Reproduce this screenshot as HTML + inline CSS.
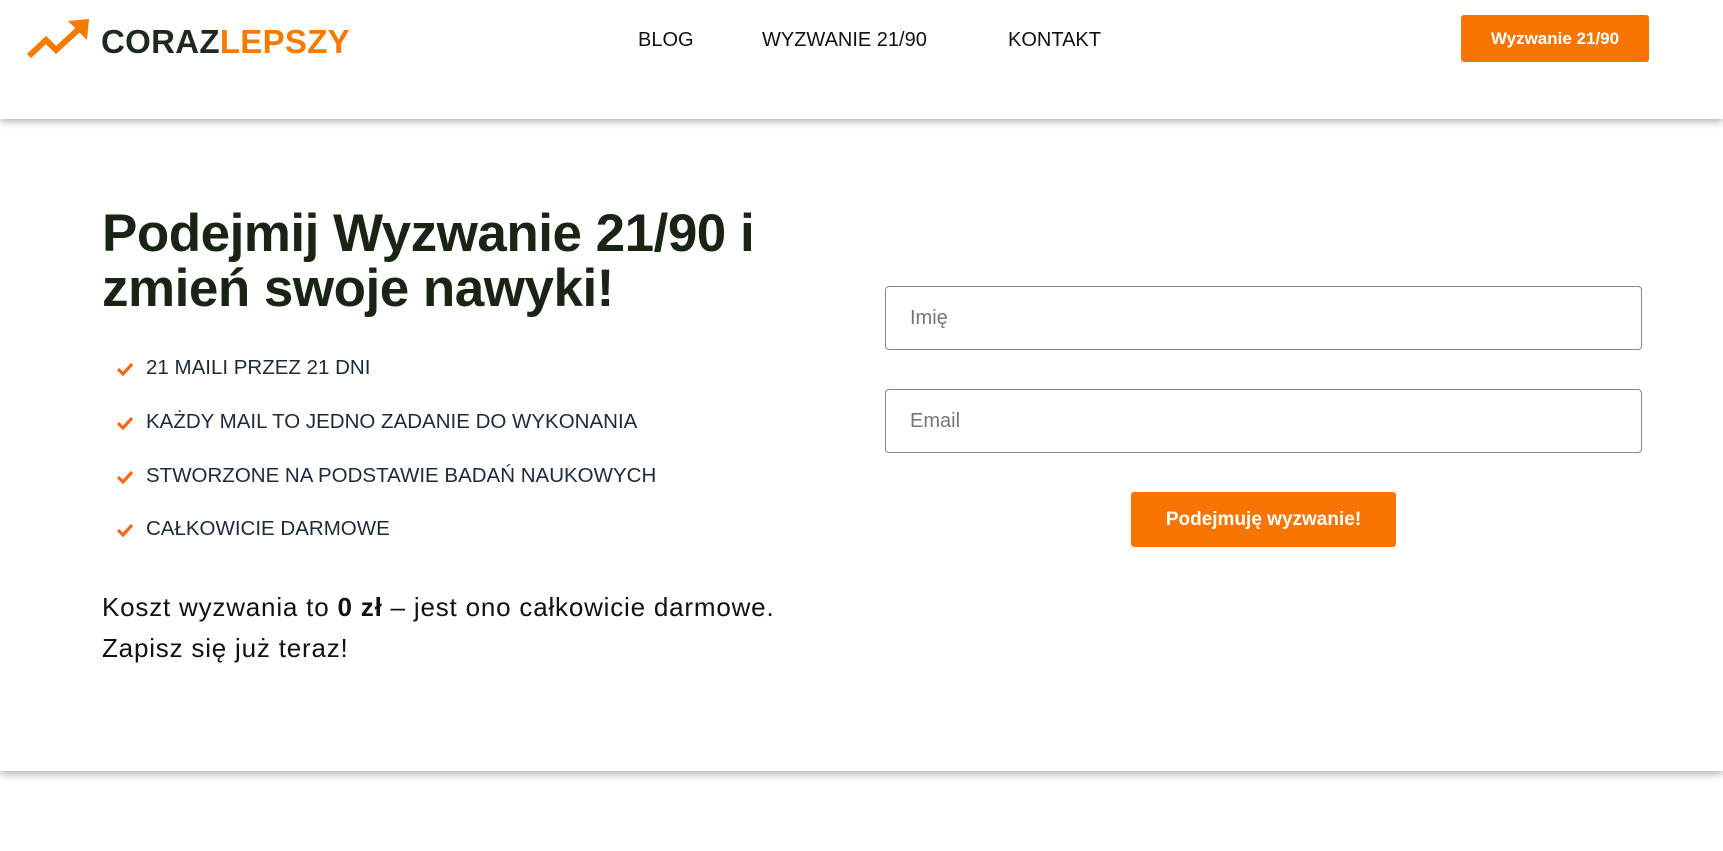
<!DOCTYPE html>
<html><head><meta charset="utf-8"><style>
*{margin:0;padding:0;box-sizing:border-box}
body{width:1723px;height:851px;background:#fff;font-family:"Liberation Sans",Arial,sans-serif;position:relative;overflow:hidden}
.hdr{position:absolute;left:0;top:0;width:1723px;height:119px;background:#fff;box-shadow:0 2px 8px rgba(0,0,0,.35);z-index:2}
.logo{position:absolute;left:101px;top:23px;font-weight:bold;font-size:33px;letter-spacing:0.3px;color:#1e2a1e}
.logo span{color:#f57a00}
.nav{position:absolute;top:29px;font-size:20px;color:#111}
.btn{position:absolute;background:#f77500;color:#fff;font-weight:bold;border-radius:3px;display:flex;align-items:center;justify-content:center}
.sec{position:absolute;left:0;top:119px;width:1723px;height:652px;background:#fff;box-shadow:0 3px 8px rgba(0,0,0,.3);z-index:1}
h1{position:absolute;left:102px;top:206px;font-size:53px;line-height:55px;color:#1a2414;font-weight:bold;z-index:3;letter-spacing:-0.5px}
.li{position:absolute;left:146px;font-size:20.5px;color:#1c2a3a;z-index:3}
.ck{position:absolute;left:116px;z-index:3}
.p{position:absolute;left:102px;font-size:26px;letter-spacing:0.8px;color:#111;z-index:3}
.in{position:absolute;left:885px;width:757px;height:64px;border:1px solid #888;border-radius:4px;z-index:3;font-size:20px;color:#777;padding-left:24px;display:flex;align-items:center}
</style></head><body>
<div class="hdr">
<svg style="position:absolute;left:26px;top:18px" width="66" height="42" viewBox="0 0 66 42"><polyline points="3,38 20,22 30,32 54,10" fill="none" stroke="#f57a00" stroke-width="6"/><polygon points="42,3 63,1 61,22" fill="#f57a00"/></svg>
<div class="logo">CORAZ<span>LEPSZY</span></div>
<div class="nav" style="left:638px">BLOG</div>
<div class="nav" style="left:762px">WYZWANIE 21/90</div>
<div class="nav" style="left:1008px">KONTAKT</div>
<div class="btn" style="left:1461px;top:15px;width:188px;height:47px;font-size:17px">Wyzwanie 21/90</div>
</div>
<div class="sec"></div>
<h1>Podejmij Wyzwanie 21/90 i<br>zmień swoje nawyki!</h1>
<svg class="ck" style="top:362px" width="18" height="14" viewBox="0 0 18 14"><polyline points="2,7 7,12 16,2" fill="none" stroke="#f06a1a" stroke-width="3.2"/></svg>
<div class="li" style="top:356px">21 MAILI PRZEZ 21 DNI</div>
<svg class="ck" style="top:416px" width="18" height="14" viewBox="0 0 18 14"><polyline points="2,7 7,12 16,2" fill="none" stroke="#f06a1a" stroke-width="3.2"/></svg>
<div class="li" style="top:410px">KAŻDY MAIL TO JEDNO ZADANIE DO WYKONANIA</div>
<svg class="ck" style="top:470px" width="18" height="14" viewBox="0 0 18 14"><polyline points="2,7 7,12 16,2" fill="none" stroke="#f06a1a" stroke-width="3.2"/></svg>
<div class="li" style="top:464px">STWORZONE NA PODSTAWIE BADAŃ NAUKOWYCH</div>
<svg class="ck" style="top:523px" width="18" height="14" viewBox="0 0 18 14"><polyline points="2,7 7,12 16,2" fill="none" stroke="#f06a1a" stroke-width="3.2"/></svg>
<div class="li" style="top:517px">CAŁKOWICIE DARMOWE</div>
<div class="p" style="top:592px">Koszt wyzwania to <b>0 zł</b> – jest ono całkowicie darmowe.</div>
<div class="p" style="top:633px">Zapisz się już teraz!</div>
<div class="in" style="top:286px">Imię</div>
<div class="in" style="top:389px">Email</div>
<div class="btn" style="left:1131px;top:492px;width:265px;height:55px;font-size:19px;z-index:3">Podejmuję wyzwanie!</div>
</body></html>
